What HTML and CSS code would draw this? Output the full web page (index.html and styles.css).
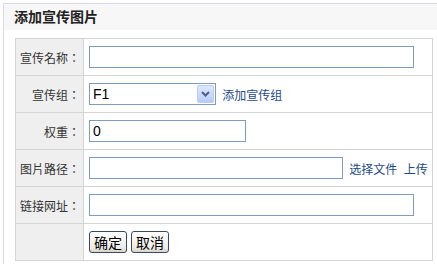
FILE: index.html
```html
<!DOCTYPE html>
<html lang="zh-CN">
  <head>
    <meta charset="UTF-8">
    <title>添加宣传图片</title>
    <link rel="stylesheet" href="styles.css">
  </head>
  <body>
    <div class="panel">
      <div class="panel-title">添加宣传图片</div>
      <table class="form-table">
        <colgroup>
          <col class="col-label">
          <col>
        </colgroup>
        <tr>
          <td class="label" lang="zh-TW">宣传名称：</td>
          <td class="field"><input type="text" class="txt txt-long"></td>
        </tr>
        <tr>
          <td class="label" lang="zh-TW">宣传组：</td>
          <td class="field">
            <span class="select-box">
              <select class="select">
                <option>F1</option>
              </select>
              <span class="select-arrow">
                <svg width="9" height="6" viewBox="0 0 9 6"><path d="M1 1 L4.5 4.5 L8 1" fill="none" stroke="#4d6185" stroke-width="2"/></svg>
              </span>
            </span>
            <a href="#" class="link">添加宣传组</a>
          </td>
        </tr>
        <tr>
          <td class="label" lang="zh-TW">权重：</td>
          <td class="field"><input type="text" class="txt txt-short" value="0"></td>
        </tr>
        <tr>
          <td class="label" lang="zh-TW">图片路径：</td>
          <td class="field">
            <input type="text" class="txt txt-mid">
            <a href="#" class="link">选择文件</a>
            <a href="#" class="link">上传</a>
          </td>
        </tr>
        <tr>
          <td class="label" lang="zh-TW">链接网址：</td>
          <td class="field"><input type="text" class="txt txt-long"></td>
        </tr>
        <tr>
          <td class="label"></td>
          <td class="field">
            <button class="btn">确定</button><button class="btn">取消</button>
          </td>
        </tr>
      </table>
    </div>
  </body>
</html>
```

FILE: styles.css
```css
* {
  box-sizing: border-box;
}

body {
  margin: 0;
  background: #fff;
  font-family: "Liberation Sans", "Noto Sans CJK SC", sans-serif;
  font-size: 12px;
  color: #333;
}

.panel {
  margin: 3px 0 0 3px;
  border-top: 1px solid #d6d6ee;
  border-left: 1px solid #d6d6ee;
  padding-bottom: 6px;
}

.panel-title {
  height: 26px;
  line-height: 26px;
  padding-left: 10px;
  background: #f7f7f7;
  font-size: 14px;
  font-weight: bold;
  color: #222;
}

.form-table {
  margin: 8px 0 0 11px;
  width: 418px;
  border-collapse: collapse;
  table-layout: fixed;
  border: 1px solid #d4d4d4;
}

.col-label {
  width: 68px;
}

.form-table td {
  height: 37px;
  padding: 0;
  border: 1px solid #d4d4d4;
  vertical-align: middle;
}

.label {
  background: #efefef;
  text-align: right;
  padding-right: 3px !important;
  white-space: nowrap;
  font-family: "Noto Sans CJK TC", sans-serif;
}

.field {
  padding-left: 5px !important;
  white-space: nowrap;
}

.txt {
  height: 22px;
  border: 1px solid #7f9db9;
  padding: 0 3px;
  font-family: "Liberation Sans", sans-serif;
  font-size: 14px;
  color: #000;
  vertical-align: middle;
}

.txt-long {
  width: 325px;
}

.txt-short {
  width: 157px;
}

.txt-mid {
  width: 254px;
}

.select-box {
  display: inline-flex;
  align-items: center;
  width: 127px;
  height: 22px;
  border: 1px solid #7f9db9;
  vertical-align: middle;
  background: #fff;
}

.select {
  appearance: none;
  -webkit-appearance: none;
  flex: 1;
  min-width: 0;
  border: none;
  background: transparent;
  padding: 0 3px;
  font-family: "Liberation Sans", sans-serif;
  font-size: 14px;
  color: #000;
}

.select-arrow {
  display: flex;
  align-items: center;
  justify-content: center;
  width: 17px;
  height: 18px;
  margin-right: 1px;
  border: 1px solid #b9cdf6;
  border-radius: 2px;
  background: linear-gradient(#dfe8fd, #b8cbf6);
}

.link {
  color: #1c4a86;
  text-decoration: none;
  margin-left: 3px;
  vertical-align: middle;
}

.btn {
  height: 22px;
  width: 38px;
  padding: 0;
  margin-right: 4px;
  border: 1px solid #3a4a66;
  border-radius: 3px;
  background: linear-gradient(#ffffff, #ecebe6 80%, #d6d3c8);
  font-family: "Noto Sans CJK SC", sans-serif;
  font-size: 14px;
  line-height: 18px;
  color: #000;
  vertical-align: middle;
}
```
